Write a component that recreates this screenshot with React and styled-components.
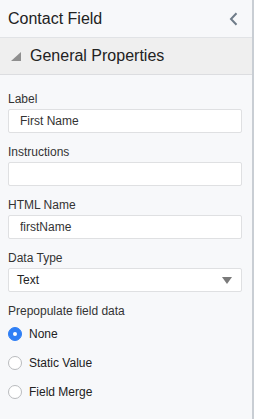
import React from 'react'
import styled, { createGlobalStyle } from 'styled-components'

const GlobalStyle = createGlobalStyle`
  body {
    margin: 0;
    background: #ffffff;
    font-family: 'Liberation Sans', Arial, sans-serif;
    color: #333333;
  }
  * {
    box-sizing: border-box;
  }
`

const Panel = styled.aside`
  width: 254px;
  height: 419px;
  background: #f7f8fa;
  border-right: 2px solid #c9ced4;
  display: flex;
  flex-direction: column;
`

const Header = styled.header`
  height: 38px;
  padding: 0 14px 0 8px;
  display: flex;
  align-items: center;
  justify-content: space-between;
  border-bottom: 1px solid #e1e3e6;
`

const Title = styled.h2`
  margin: 0;
  font-size: 16px;
  font-weight: 400;
  color: #222;
`

const CollapseButton = styled.button`
  border: none;
  background: none;
  padding: 0;
  display: flex;
  cursor: pointer;
`

const SectionBar = styled.div`
  height: 37px;
  padding: 0 10px;
  display: flex;
  align-items: center;
  gap: 8px;
  background: #efefef;
  border-bottom: 1px solid #dcdde0;
`

const SectionTitle = styled.h3`
  margin: 0;
  font-size: 16px;
  font-weight: 400;
  color: #222;
`

const Form = styled.form`
  padding: 17px 10px 0 8px;
  display: flex;
  flex-direction: column;
`

const Field = styled.div`
  display: flex;
  flex-direction: column;
  gap: 3px;
  margin-bottom: 12px;
`

const Label = styled.label`
  font-size: 12px;
  line-height: 14px;
  color: #333;
`

const Input = styled.input`
  height: 24px;
  width: 100%;
  padding: 0 11px;
  border: 1px solid #dfe0e2;
  border-radius: 2px;
  background: #fff;
  font-family: inherit;
  font-size: 12px;
  color: #333;
  outline: none;
`

const Select = styled.div`
  height: 24px;
  padding: 0 9px 0 8px;
  border: 1px solid #dfe0e2;
  border-radius: 2px;
  background: #fff;
  display: flex;
  align-items: center;
  justify-content: space-between;
  font-size: 12px;
  color: #222;
`

const RadioGroup = styled.div`
  display: flex;
  flex-direction: column;
  margin-top: 1px;
`

const RadioRow = styled.label`
  height: 29px;
  display: flex;
  align-items: center;
  gap: 7px;
  font-size: 12px;
  color: #222;
`

const RadioDot = styled.span`
  width: 14px;
  height: 14px;
  border-radius: 50%;
  display: grid;
  place-items: center;
  background: ${(p) => (p.checked ? '#2f7ff5' : '#fff')};
  border: 1px solid ${(p) => (p.checked ? '#2f7ff5' : '#b9bbbe')};
  &::after {
    content: '';
    width: 4px;
    height: 4px;
    border-radius: 50%;
    background: #fff;
    display: ${(p) => (p.checked ? 'block' : 'none')};
  }
`

const fields = [
  { id: 'label', label: 'Label', value: 'First Name' },
  { id: 'instructions', label: 'Instructions', value: '' },
  { id: 'htmlName', label: 'HTML Name', value: 'firstName' },
]

const options = ['None', 'Static Value', 'Field Merge']

const App = () => {
  return (
    <>
      <GlobalStyle />
      <Panel>
        <Header>
          <Title>Contact Field</Title>
          <CollapseButton aria-label='collapse'>
            <svg width='9' height='14' viewBox='0 0 9 14'>
              <path d='M7.5 1.2L2 7l5.5 5.8' fill='none' stroke='#6f7c89' strokeWidth='2' />
            </svg>
          </CollapseButton>
        </Header>
        <SectionBar>
          <svg width='12' height='11' viewBox='0 0 12 11'>
            <polygon points='11,1 11,10 1,10' fill='#8f8f8f' />
          </svg>
          <SectionTitle>General Properties</SectionTitle>
        </SectionBar>
        <Form>
          {fields.map((f) => (
            <Field key={f.id}>
              <Label htmlFor={f.id}>{f.label}</Label>
              <Input id={f.id} defaultValue={f.value} />
            </Field>
          ))}
          <Field>
            <Label>Data Type</Label>
            <Select>
              <span>Text</span>
              <svg width='10' height='7' viewBox='0 0 10 7'>
                <polygon points='0,0 10,0 5,7' fill='#7a7a7a' />
              </svg>
            </Select>
          </Field>
          <Label>Prepopulate field data</Label>
          <RadioGroup>
            {options.map((o, i) => (
              <RadioRow key={o}>
                <RadioDot checked={i === 0} />
                {o}
              </RadioRow>
            ))}
          </RadioGroup>
        </Form>
      </Panel>
    </>
  )
}

export default App
